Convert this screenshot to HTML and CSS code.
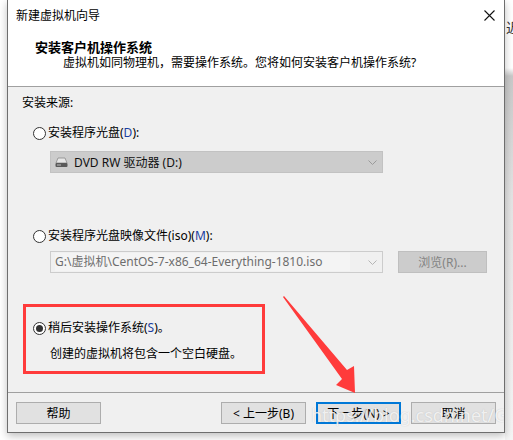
FILE: index.html
```html
<!DOCTYPE html>
<html lang="zh-CN">
<head>
    <meta charset="UTF-8">
    <title>新建虚拟机向导</title>
    <link rel="stylesheet" href="styles.css">
</head>
<body>
    <div class="desk">
        <div class="window">
            <div class="titlebar">
                <span class="title-text">新建虚拟机向导</span>
                <svg class="close" width="11" height="11" viewBox="0 0 11 11">
                    <path d="M0.5 0.5 L10.5 10.5 M10.5 0.5 L0.5 10.5" stroke="#111" stroke-width="1.1" fill="none"/>
                </svg>
            </div>
            <div class="header">
                <div class="header-title">安装客户机操作系统</div>
                <div class="header-sub">虚拟机如同物理机，需要操作系统。您将如何安装客户机操作系统?</div>
            </div>

            <div class="content">
                <div class="source-label">安装来源:</div>

                <div class="option opt-disc">
                    <span class="radio"></span>
                    <span>安装程序光盘(<span class="key">D</span>):</span>
                </div>
                <div class="select">
                    <svg class="drive" width="13" height="11" viewBox="0 0 13 11">
                        <path d="M3 1 H10 L12 6 H1 Z" fill="#e6e6e6" stroke="#8a8a8a" stroke-width="0.8"/>
                        <rect x="0.5" y="6" width="12" height="4" rx="1" fill="#5a5a5a"/>
                        <rect x="2" y="7.5" width="4" height="1" fill="#bdbdbd"/>
                    </svg>
                    <span class="select-text">DVD RW 驱动器 (D:)</span>
                    <svg class="chev" width="9" height="5" viewBox="0 0 9 5">
                        <path d="M0.5 0.5 L4.5 4.5 L8.5 0.5" stroke="#9a9a9a" fill="none"/>
                    </svg>
                </div>

                <div class="option opt-iso">
                    <span class="radio"></span>
                    <span>安装程序光盘映像文件(iso)(<span class="key">M</span>):</span>
                </div>
                <div class="iso-row">
                    <div class="combo">
                        <span class="combo-text">G:\虚拟机\CentOS-7-x86_64-Everything-1810.iso</span>
                        <svg class="chev" width="9" height="5" viewBox="0 0 9 5">
                            <path d="M0.5 0.5 L4.5 4.5 L8.5 0.5" stroke="#b5b5b5" fill="none"/>
                        </svg>
                    </div>
                    <div class="browse">浏览(R)...</div>
                </div>

                <div class="later-box">
                    <div class="option">
                        <span class="radio checked"></span>
                        <span>稍后安装操作系统(<span class="key">S</span>)。</span>
                    </div>
                    <div class="later-note">创建的虚拟机将包含一个空白硬盘。</div>
                </div>
            </div>

            <div class="footer">
                <div class="btn">帮助</div>
                <div class="btn-group">
                    <div class="btn">&lt; 上一步(B)</div>
                    <div class="btn primary">下一步(N) &gt;</div>
                    <div class="btn">取消</div>
                </div>
            </div>

            <svg class="arrow" width="80" height="100" viewBox="280 294 80 100">
                <path d="M284 296 L347 370 L354 366 L355 393 L336 385 L342 379 L283 297 Z" fill="#ff3b3b"/>
            </svg>
            <div class="watermark">https://blog.csdn.net/Gladys</div>
        </div>
        <div class="side-strip">
            <span class="side-char">近</span>
        </div>
    </div>
</body>
</html>
```

FILE: styles.css
```css
body {
    margin: 0;
    background-color: #ffffff;
    font-family: "Noto Sans", "Noto Sans CJK SC", sans-serif;
    font-size: 12px;
    color: #000;
    overflow: hidden;
}
.desk {
    display: flex;
    height: 440px;
    padding-left: 7px;
}
.window {
    position: relative;
    width: 496px;
    height: 432px;
    background-color: #f0f0f0;
    border: 1px solid #6e6e6e;
    border-top: none;
    box-shadow: 0 3px 8px rgba(0,0,0,0.25);
    display: flex;
    flex-direction: column;
    overflow: hidden;
}
.titlebar {
    height: 30px;
    background-color: #ffffff;
    display: flex;
    align-items: center;
    justify-content: space-between;
    padding: 0 9px 0 8px;
}
.title-text {
    line-height: 16px;
    margin-top: 1px;
}
.header {
    height: 57px;
    background-color: #ffffff;
    border-bottom: 1px solid #a0a0a0;
    padding-left: 27px;
    box-sizing: border-box;
    padding-top: 9px;
}
.header-title {
    font-weight: bold;
    font-size: 13px;
    line-height: 16px;
}
.header-sub {
    line-height: 15px;
    padding-left: 28px;
}
.content {
    flex: 1;
    padding-left: 14px;
    display: flex;
    flex-direction: column;
}
.source-label {
    margin-top: 8px;
    line-height: 16px;
}
.option {
    display: flex;
    align-items: center;
    height: 16px;
    line-height: 16px;
    padding-left: 11px;
}
.opt-disc {
    margin-top: 14px;
}
.opt-iso {
    margin-top: 55px;
}
.key {
    color: #1a3ea0;
}
.radio {
    width: 11px;
    height: 11px;
    border: 1px solid #333333;
    border-radius: 50%;
    background-color: #ffffff;
    margin-right: 2px;
    position: relative;
    flex: none;
}
.radio.checked::after {
    content: "";
    position: absolute;
    left: 2px;
    top: 2px;
    width: 7px;
    height: 7px;
    border-radius: 50%;
    background-color: #333333;
}
.select {
    margin: 10px 0 0 28px;
    width: 333px;
    height: 22px;
    box-sizing: border-box;
    background-color: #cccccc;
    border: 1px solid #c2c2c2;
    display: flex;
    align-items: center;
    padding-left: 4px;
}
.drive {
    margin-right: 6px;
}
.select-text {
    flex: 1;
    color: #111;
}
.chev {
    margin-right: 5px;
}
.iso-row {
    display: flex;
    margin: 7px 0 0 28px;
    gap: 15px;
}
.combo {
    width: 333px;
    height: 22px;
    box-sizing: border-box;
    border: 1px solid #cccccc;
    background-color: #f0f0f0;
    display: flex;
    align-items: center;
    padding-left: 4px;
}
.combo-text {
    flex: 1;
    color: #6d6d6d;
    background-color: #f4f4f4;
    margin-right: 18px;
    line-height: 18px;
}
.browse {
    width: 89px;
    height: 22px;
    box-sizing: border-box;
    background-color: #cccccc;
    border: 1px solid #bfbfbf;
    color: #838383;
    display: flex;
    align-items: center;
    justify-content: center;
}
.later-box {
    margin: 31px 0 0 1px;
    width: 242px;
    height: 70px;
    box-sizing: border-box;
    border: 3px solid #ff3b3b;
    padding-top: 13px;
}
.later-box .option {
    padding-left: 7px;
}
.later-note {
    margin-top: 10px;
    line-height: 16px;
    padding-left: 24px;
}
.footer {
    height: 40px;
    box-sizing: border-box;
    border-top: 1px solid #a0a0a0;
    display: flex;
    justify-content: space-between;
    padding: 9px 8px 0 8px;
}
.btn-group {
    display: flex;
    gap: 10px;
}
.btn {
    width: 85px;
    height: 22px;
    box-sizing: border-box;
    background-color: #e1e1e1;
    border: 1px solid #adadad;
    display: flex;
    align-items: center;
    justify-content: center;
}
.btn.primary {
    border: 2px solid #0078d7;
}
.arrow {
    position: absolute;
    left: 272px;
    top: 294px;
}
.watermark {
    position: absolute;
    left: 303px;
    top: 403px;
    font-size: 18px;
    color: rgba(255,255,255,0.8);
    text-shadow: 0 0 1px rgba(120,120,120,0.4);
    pointer-events: none;
}
.side-strip {
    flex: 1;
    background: linear-gradient(#ffffff 0, #ffffff 68px, #c9c9c9 76px, #e4e4e4 200px, #f5f5f5 440px);
    overflow: hidden;
}
.side-char {
    display: block;
    margin-top: 17px;
    margin-left: 1px;
    font-size: 14px;
    color: #333;
}
```
